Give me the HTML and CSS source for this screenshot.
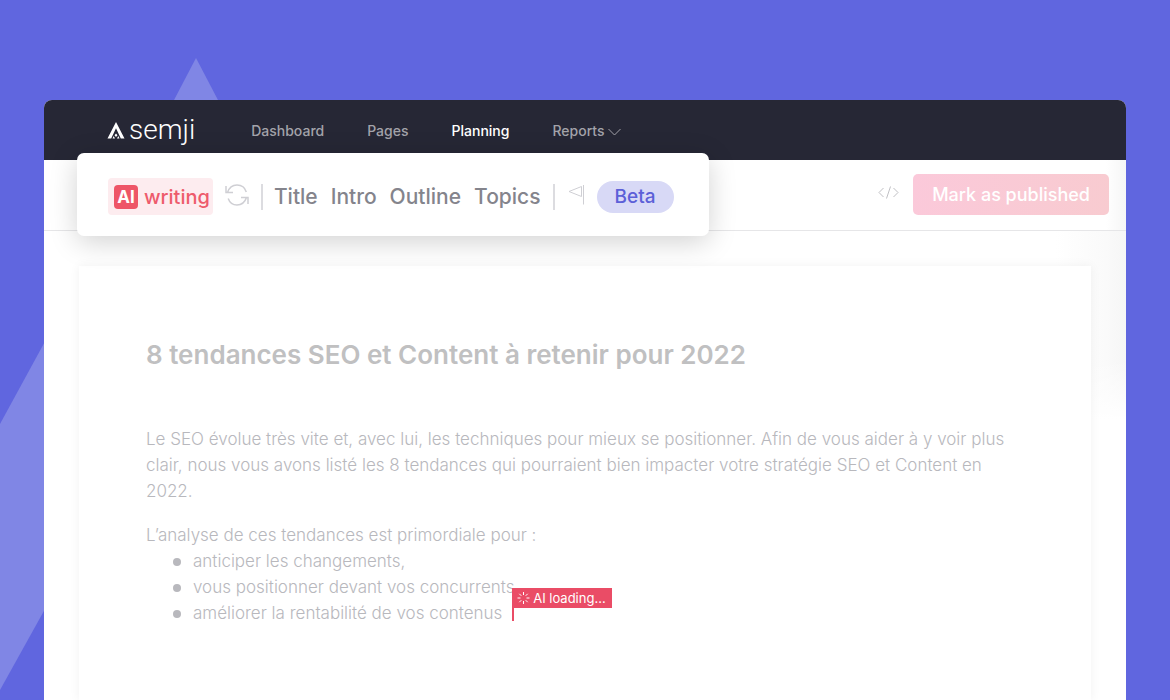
FILE: index.html
```
<!DOCTYPE html>
<html lang="fr">
<head>
  <meta charset="UTF-8">
  <meta name="viewport" content="width=device-width, initial-scale=1">
  <title>Semji - Planning</title>
  <link rel="stylesheet" href="styles.css">
</head>
<body>

<!-- Triangles du fond -->
<svg class="shapes" width="240" height="700" viewBox="0 0 240 700" aria-hidden="true">
  <path d="M196 58L219 102H173Z"/>
  <path d="M0 424L60 314V582L0 690Z"/>
</svg>

<div class="window">
  <header class="navbar">
    <a href="#" class="logo">
      <svg width="18" height="17" viewBox="0 0 18 17" aria-hidden="true">
        <path d="M9 0L17.500 16.500H13.800L9 6.200L4.200 16.500H.500Z"/>
        <path d="M9 11.500L10.500 13.200L9 14.900L7.500 13.200ZM6.700 14L8 16.500H5.500ZM11.300 14L12.500 16.500H10Z"/>
      </svg>
      <span>semji</span>
    </a>
    <nav class="menu">
      <a href="#">Dashboard</a>
      <a href="#">Pages</a>
      <a href="#" class="active">Planning</a>
      <a href="#">Reports
        <svg width="13" height="8" viewBox="0 0 13 8" aria-hidden="true"><path d="M.500 1L6.500 7L12.500 1"/></svg>
      </a>
    </nav>
  </header>

  <div class="content">
    <div class="actions">
      <button class="code-btn" aria-label="Code">
        <svg width="21" height="13" viewBox="0 0 21 13" aria-hidden="true"><path d="M5.500 2L1 6.500L5.500 11M15.500 2L20 6.500L15.500 11M12.500 .500L8.500 12.500"/></svg>
      </button>
      <button class="publish-btn">Mark as published</button>
    </div>

    <main class="paper">
      <h1>8 tendances SEO et Content à retenir pour 2022</h1>
      <p>Le SEO évolue très vite et, avec lui, les techniques pour mieux se positionner. Afin de vous aider à y voir plus clair, nous vous avons listé les 8 tendances qui pourraient bien impacter votre stratégie SEO et Content en 2022.</p>
      <p>L’analyse de ces tendances est primordiale pour :</p>
      <ul>
        <li>anticiper les changements,</li>
        <li>vous positionner devant vos concurrents,</li>
        <li>améliorer la rentabilité de vos contenus
          <span class="cursor">
            <span class="loading">
              <svg width="13" height="12" viewBox="0 0 13 12" aria-hidden="true"><path d="M6.500 0V3M6.500 9V12M.500 6H3.500M9.500 6H12.500M2.300 1.800L4.300 3.800M8.700 8.200L10.700 10.200M10.700 1.800L8.700 3.800M4.300 8.200L2.300 10.200"/></svg>
              AI loading...
            </span>
          </span>
        </li>
      </ul>
    </main>
  </div>

  <!-- Barre AI writing -->
  <div class="toolbar">
    <button class="ai-btn"><span class="ai-badge">AI</span>writing</button>
    <button class="icon-btn" aria-label="Régénérer">
      <svg class="refresh" width="24" height="22" viewBox="0 0 24 22" aria-hidden="true">
        <path d="M2.500 8.500C4 4 7.500 1 12 1C16.500 1 20 3.600 21.300 8M21.500 13.500C20 18 16.500 21 12 21C7.800 21 4.600 18.500 3.200 14.500M1 2V8.500H8M16 13.500H23V20"/>
      </svg>
    </button>
    <div class="generate">
      <button>Title</button>
      <button>Intro</button>
      <button>Outline</button>
      <button>Topics</button>
    </div>
    <button class="icon-btn" aria-label="Feedback">
      <svg width="18" height="20" viewBox="0 0 18 20" aria-hidden="true"><path d="M14.500 1.500L2 6.500L14.500 11.500ZM16.500 0V19.500"/></svg>
    </button>
    <span class="beta">Beta</span>
  </div>
</div>

</body>
</html>
```
FILE: styles.css
```
* {
  box-sizing: border-box;
}

body {
  margin: 0;
  padding: 100px 44px 0;
  min-height: 100vh;
  display: flex;
  position: relative;
  overflow: hidden;
  background-color: #6066df;
  font-family: Inter, Roboto, sans-serif;
}

button {
  padding: 0;
  border: none;
  background: none;
  font-family: inherit;
  cursor: pointer;
}

a {
  color: inherit;
  text-decoration: none;
}

svg {
  fill: none;
  stroke: currentColor;
}

.shapes {
  position: absolute;
  left: 0;
  top: 0;
  fill: #8086e5;
  stroke: none;
}

.window {
  position: relative;
  flex: 1;
  display: flex;
  flex-direction: column;
  border-radius: 8px 8px 0 0;
  overflow: hidden;
  background: #fff;
}

.navbar {
  height: 60px;
  display: flex;
  align-items: center;
  gap: 56px;
  padding: 0 63px;
  background-color: #262735;
}

.logo {
  display: flex;
  align-items: center;
  gap: 4px;
  font-family: Roboto, sans-serif;
  font-size: 28px;
  line-height: 32px;
  font-weight: 300;
  color: #fff;
}

.logo svg {
  fill: #fff;
  stroke: none;
}

.menu {
  display: flex;
  gap: 43px;
  font-size: 14px;
  font-weight: 500;
  color: #a3a3aa;
}

.menu .active {
  color: #fff;
}

.content {
  flex: 1;
  display: flex;
  flex-direction: column;
  background:
    linear-gradient(to bottom, rgba(255, 255, 255, 0) 200px, #fff 260px),
    linear-gradient(to left, #f6f6f6, #fafafa 20px, #fff 70px);
}

.actions {
  height: 71px;
  display: flex;
  align-items: center;
  justify-content: flex-end;
  gap: 14px;
  padding: 0 17px 2px;
  border-bottom: 1px solid #e6e6e8;
  background: linear-gradient(to left, #f6f6f6, #fff 20px);
}

.code-btn {
  color: #bfbfc3;
}

.publish-btn {
  height: 41px;
  padding: 0 19px;
  border-radius: 5px;
  background: linear-gradient(100deg, #fbc9da, #f8cbd0);
  color: #fff;
  font-size: 18px;
  font-weight: 500;
}

.toolbar {
  position: absolute;
  left: 33px;
  top: 53px;
  height: 83px;
  display: flex;
  align-items: center;
  gap: 12px;
  padding: 4px 35px 0 31px;
  border-radius: 7px;
  background-color: #fff;
  box-shadow: 0 6px 28px rgba(0, 0, 0, 0.18);
}

.ai-btn {
  height: 37px;
  display: flex;
  align-items: center;
  gap: 6px;
  padding: 0 3px 0 6px;
  border-radius: 4px;
  background-color: #fdecef;
  color: #ee5b6c;
  font-size: 20px;
  font-weight: 500;
}

.ai-badge {
  width: 24px;
  height: 24px;
  border-radius: 4px;
  background-color: #ee5567;
  color: #fff;
  font-size: 17px;
  line-height: 24px;
  font-weight: 700;
}

.icon-btn {
  display: flex;
  padding-bottom: 3px;
  color: #cfcfd4;
}

.refresh {
  stroke-width: 1.5;
}

.generate {
  height: 26px;
  display: flex;
  align-items: center;
  gap: 13px;
  padding: 0 12px 0 11px;
  border-left: 2px solid #dcdce0;
  border-right: 2px solid #dcdce0;
}

.generate button {
  color: #84848c;
  font-size: 21px;
  font-weight: 500;
}

.beta {
  padding: 0 18px;
  border-radius: 16px;
  background-color: #d8d9f6;
  color: #5c60d8;
  font-size: 19px;
  line-height: 32px;
  font-weight: 500;
}

.paper {
  flex: 1;
  margin: 35px 35px 0;
  padding: 71px 67px 0;
  background-color: #fff;
  box-shadow: 0 0 10px rgba(0, 0, 0, 0.06);
  color: #b8b8bd;
  font-size: 17px;
  line-height: 26px;
  font-weight: 300;
}

h1 {
  margin: 0 0 53px;
  color: #c0c0c1;
  font-size: 26px;
  line-height: 36px;
  font-weight: 600;
}

p {
  margin: 0 0 18px;
}

ul {
  margin: -18px 0 0;
  padding-left: 47px;
  list-style: none;
}

li::before {
  content: "";
  display: inline-block;
  width: 8px;
  height: 8px;
  margin: 0 12px 1px -20px;
  border-radius: 50%;
  background-color: #b8b8bd;
}

.cursor {
  display: inline-block;
  position: relative;
  height: 18px;
  margin-left: 5px;
  vertical-align: -2px;
  border-left: 2px solid #ea4c66;
}

.loading {
  position: absolute;
  left: -2px;
  top: -15px;
  display: flex;
  align-items: center;
  gap: 3px;
  padding: 0 6px 0 5px;
  background-color: #ea4c66;
  color: #fff;
  font-size: 13px;
  line-height: 20px;
  font-weight: 400;
  white-space: nowrap;
}
```
